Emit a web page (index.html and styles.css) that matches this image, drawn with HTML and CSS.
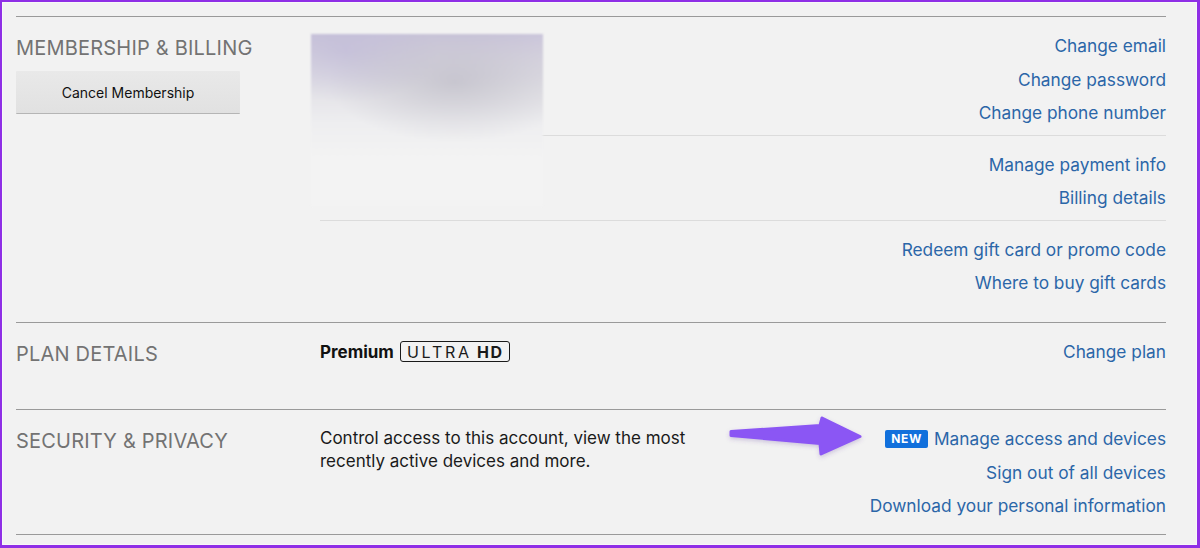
FILE: index.html
```html
<!DOCTYPE html>
<html lang="en">
<head>
<meta charset="utf-8">
<title>Account</title>
<link rel="stylesheet" href="styles.css">
</head>
<body>
<div class="frame">
  <main class="account">
    <section class="section section--membership">
      <div class="section-head">
        <h2 class="section-title">MEMBERSHIP &amp; BILLING</h2>
        <button class="btn-cancel" type="button">Cancel Membership</button>
      </div>
      <div class="section-body">
        <div class="redacted"></div>
        <div class="subsection">
          <div class="sub-info"></div>
          <ul class="links">
            <li><a href="#">Change email</a></li>
            <li><a href="#">Change password</a></li>
            <li><a href="#">Change phone number</a></li>
          </ul>
        </div>
        <div class="subsection">
          <div class="sub-info"></div>
          <ul class="links">
            <li><a href="#">Manage payment info</a></li>
            <li><a href="#">Billing details</a></li>
          </ul>
        </div>
        <div class="subsection">
          <div class="sub-info"></div>
          <ul class="links">
            <li><a href="#">Redeem gift card or promo code</a></li>
            <li><a href="#">Where to buy gift cards</a></li>
          </ul>
        </div>
      </div>
    </section>

    <section class="section section--plan">
      <div class="section-head">
        <h2 class="section-title">PLAN DETAILS</h2>
      </div>
      <div class="section-body">
        <div class="subsection">
          <div class="sub-info plan-info">
            <b class="plan-name">Premium</b><span class="plan-badge"><span class="uhd-ultra">ULTRA</span><span class="uhd-hd">HD</span></span>
          </div>
          <ul class="links">
            <li><a href="#">Change plan</a></li>
          </ul>
        </div>
      </div>
    </section>

    <section class="section section--security">
      <div class="section-head">
        <h2 class="section-title">SECURITY &amp; PRIVACY</h2>
      </div>
      <div class="section-body">
        <div class="subsection">
          <p class="sub-info description">Control access to this account, view the most recently active devices and more.</p>
          <ul class="links">
            <li><span class="badge-new">NEW</span><a href="#">Manage access and devices</a></li>
            <li><a href="#">Sign out of all devices</a></li>
            <li><a href="#">Download your personal information</a></li>
          </ul>
        </div>
      </div>
    </section>
  </main>

  <svg class="annotation" viewBox="0 0 1200 548" width="1200" height="548" aria-hidden="true">
    <defs>
      <filter id="ashadow" x="-10%" y="-30%" width="120%" height="160%">
        <feDropShadow dx="0" dy="2" stdDeviation="2" flood-color="#5a3a9a" flood-opacity="0.25"/>
      </filter>
    </defs>
    <path d="M731 431.5 L820 425.5 L822 418 L860 436.5 L821 454 L820 443.5 L731 435.5 Z"
          fill="#8b57f4" stroke="#8b57f4" stroke-width="3" stroke-linejoin="round" filter="url(#ashadow)"/>
  </svg>
</div>
</body>
</html>
```

FILE: styles.css
```css
* {
  box-sizing: border-box;
}

html,
body {
  margin: 0;
  padding: 0;
}

body {
  width: 1200px;
  height: 548px;
  overflow: hidden;
  font-family: Inter, "Noto Sans", Arial, sans-serif;
  background: #f2f2f2;
}

.frame {
  position: relative;
  width: 1200px;
  height: 548px;
  border-style: solid;
  border-color: #8f2fe6;
  border-width: 2px 3px 3px 2px;
  background: #f2f2f2;
  box-shadow: inset 0 0 0 1px #f8f8f8;
  padding: 14px 31px 0 14px;
}

.account {
  border-bottom: 1px solid #9a9a9a;
}

.section {
  display: grid;
  grid-template-columns: 304px 1fr;
  border-top: 1px solid #9a9a9a;
}

.section--membership {
  padding-bottom: 17.5px;
}

.section--plan {
  padding-bottom: 35.5px;
}

.section--security {
  padding-bottom: 6.5px;
}

.section-title {
  margin: 0;
  padding-top: 19px;
  font-size: 20px;
  line-height: 24px;
  font-weight: 400;
  color: #737373;
  letter-spacing: 0.2px;
}

.btn-cancel {
  display: block;
  width: 224px;
  height: 42px;
  margin-top: 11px;
  border: 0;
  border-radius: 1px;
  background: linear-gradient(#e9e9e9, #e1e1e1);
  box-shadow: 0 1px 0 #b5b5b5;
  font-family: inherit;
  font-size: 14px;
  color: #111;
  padding: 0;
}

.section-body {
  position: relative;
}

.subsection {
  display: flex;
  justify-content: space-between;
  align-items: flex-start;
  padding: 12px 0 5px;
  border-bottom: 1px solid #dcdcdc;
}

.subsection:last-child {
  border-bottom: 0;
}

.sub-info {
  margin: 0;
}

.links {
  list-style: none;
  margin: 0;
  padding: 0;
  text-align: right;
  font-size: 17.3px;
  line-height: 33.5px;
}

.links a {
  color: #2b66a8;
  text-decoration: none;
}

.redacted {
  position: absolute;
  z-index: 1;
  left: -9px;
  top: 17px;
  width: 232px;
  height: 172px;
  background:
    radial-gradient(ellipse 55% 35% at 62% 28%, rgba(180, 178, 190, 0.55), rgba(180, 178, 190, 0) 100%),
    radial-gradient(ellipse 40% 30% at 15% 10%, rgba(190, 184, 215, 0.6), rgba(190, 184, 215, 0) 100%),
    linear-gradient(#cac5da 0%, #d7d4e0 14%, #e3e2e7 32%, #eeeef0 52%, #f3f3f3 72%, #f3f3f3 100%);
  filter: blur(1px);
}

.plan-info {
  display: flex;
  align-items: center;
  height: 33.5px;
}

.plan-name {
  font-size: 17px;
  font-weight: 700;
  color: #111;
}

.plan-badge {
  display: inline-flex;
  align-items: center;
  height: 21px;
  margin-left: 6px;
  padding: 0 5px 0 6px;
  border: 1.5px solid #1a1a1a;
  border-radius: 3px;
  font-size: 16px;
  color: #1a1a1a;
  letter-spacing: 2.8px;
}

.uhd-ultra {
  font-weight: 400;
}

.uhd-hd {
  font-weight: 700;
  margin-left: 5px;
  letter-spacing: 1.6px;
}

.description {
  width: 400px;
  padding-top: 5px;
  font-size: 17px;
  line-height: 23px;
  color: #1a1a1a;
}

.badge-new {
  display: inline-block;
  height: 18px;
  line-height: 18px;
  padding: 0 6px;
  margin-right: 6px;
  vertical-align: 2px;
  border-radius: 2px;
  background: #1170dc;
  color: #fff;
  font-size: 12px;
  font-weight: 700;
  letter-spacing: 0.6px;
}

.annotation {
  position: absolute;
  left: -2px;
  top: -2px;
  pointer-events: none;
}
```
